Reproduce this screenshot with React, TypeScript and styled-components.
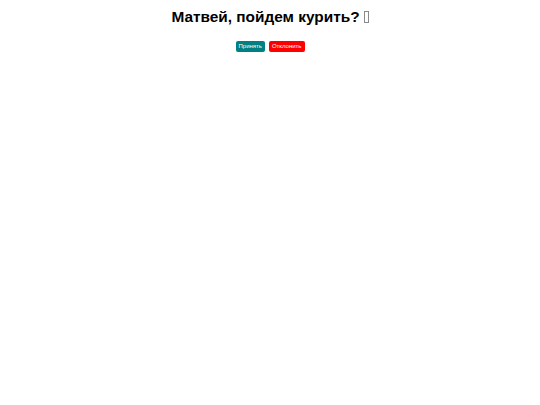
import React from "react";
import styled, { createGlobalStyle } from "styled-components";

const Global = createGlobalStyle`
  html, body { margin: 0; padding: 0; background: #fff; }
  body { font-family: "Liberation Sans", Arial, sans-serif; }
`;

const Page = styled.div`
  display: flex;
  flex-direction: column;
  align-items: center;
  padding-top: 8px;
`;

const Title = styled.h1`
  margin: 0;
  font-size: 15.4px;
  line-height: 18px;
  font-weight: bold;
  color: #000;
  display: flex;
  align-items: center;
  gap: 4px;
`;

const Tofu = styled.span`
  display: inline-block;
  width: 3px;
  height: 10px;
  border: 1px solid #8a8a8a;
`;

const Actions = styled.div`
  display: flex;
  gap: 4px;
  margin-top: 15px;
`;

const Button = styled.button<{ $tone: "accept" | "decline" }>`
  font-family: "Liberation Sans", Arial, sans-serif;
  font-size: 6px;
  line-height: 11px;
  height: 11px;
  padding: 0 3px;
  border: none;
  border-radius: 2px;
  color: #fff;
  background: ${(p) => (p.$tone === "accept" ? "#008080" : "#ff0000")};
  cursor: pointer;
`;

export default function App() {
  return (
    <>
      <Global />
      <Page>
        <Title>
          Матвей, пойдем курить?
          <Tofu role="img" aria-label="🚬" />
        </Title>
        <Actions>
          <Button $tone="accept">Принять</Button>
          <Button $tone="decline">Отклонить</Button>
        </Actions>
      </Page>
    </>
  );
}
